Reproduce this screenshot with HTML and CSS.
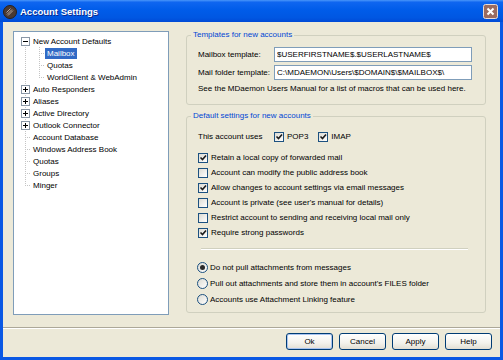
FILE: index.html
```html
<!DOCTYPE html>
<html lang="en">
<head>
    <meta charset="UTF-8">
    <meta name="viewport" content="width=device-width, initial-scale=1.0">
    <title>Account Settings</title>
    <link rel="stylesheet" href="styles.css">
</head>
<body>
    <div class="window">
        <div class="titlebar">
            <svg class="app-icon" width="14" height="14" viewBox="0 0 14 14">
                <circle cx="7" cy="7" r="6.5" fill="#4a3a33" stroke="#2b201b"/>
                <path d="M4 9.5l5-5M5 10.5l5-5M3.5 7.5l4-4" stroke="#b9a89c" stroke-width="1"/>
            </svg>
            <span class="title">Account Settings</span>
            <svg class="close-btn" width="15" height="15" viewBox="0 0 15 15">
                <rect x="0.5" y="0.5" width="14" height="14" rx="2" fill="#9a6b60" stroke="#e9dcd6"/>
                <path d="M4.5 4.5l6 6M10.5 4.5l-6 6" stroke="#fff" stroke-width="2"/>
            </svg>
        </div>

        <div class="client">
            <div class="main">
                <ul class="tree">
                    <li class="node"><span class="conn top-first"><svg width="9" height="9"><rect x="0.5" y="0.5" width="8" height="8" fill="#fff" stroke="#8a97a6"/><path d="M2 4.5h5" stroke="#000"/></svg></span><span class="label">New Account Defaults</span></li>
                    <li class="node"><span class="conn pass"></span><span class="conn sub-mid"></span><span class="label selected">Mailbox</span></li>
                    <li class="node"><span class="conn pass"></span><span class="conn sub-mid"></span><span class="label">Quotas</span></li>
                    <li class="node"><span class="conn pass"></span><span class="conn sub-last"></span><span class="label">WorldClient &amp; WebAdmin</span></li>
                    <li class="node"><span class="conn top-mid"><svg width="9" height="9"><rect x="0.5" y="0.5" width="8" height="8" fill="#fff" stroke="#8a97a6"/><path d="M2 4.5h5M4.5 2v5" stroke="#000"/></svg></span><span class="label">Auto Responders</span></li>
                    <li class="node"><span class="conn top-mid"><svg width="9" height="9"><rect x="0.5" y="0.5" width="8" height="8" fill="#fff" stroke="#8a97a6"/><path d="M2 4.5h5M4.5 2v5" stroke="#000"/></svg></span><span class="label">Aliases</span></li>
                    <li class="node"><span class="conn top-mid"><svg width="9" height="9"><rect x="0.5" y="0.5" width="8" height="8" fill="#fff" stroke="#8a97a6"/><path d="M2 4.5h5M4.5 2v5" stroke="#000"/></svg></span><span class="label">Active Directory</span></li>
                    <li class="node"><span class="conn top-mid"><svg width="9" height="9"><rect x="0.5" y="0.5" width="8" height="8" fill="#fff" stroke="#8a97a6"/><path d="M2 4.5h5M4.5 2v5" stroke="#000"/></svg></span><span class="label">Outlook Connector</span></li>
                    <li class="node"><span class="conn top-mid"></span><span class="label">Account Database</span></li>
                    <li class="node"><span class="conn top-mid"></span><span class="label">Windows Address Book</span></li>
                    <li class="node"><span class="conn top-mid"></span><span class="label">Quotas</span></li>
                    <li class="node"><span class="conn top-mid"></span><span class="label">Groups</span></li>
                    <li class="node"><span class="conn top-last"></span><span class="label">Minger</span></li>
                </ul>

                <div class="panel">
                    <fieldset class="group">
                        <legend>Templates for new accounts</legend>
                        <div class="field-row">
                            <span class="field-label">Mailbox template:</span>
                            <input class="text-input" type="text" value="$USERFIRSTNAME$.$USERLASTNAME$">
                        </div>
                        <div class="field-row">
                            <span class="field-label">Mail folder template:</span>
                            <input class="text-input" type="text" value="C:\MDAEMON\Users\$DOMAIN$\$MAILBOX$\">
                        </div>
                        <p class="note">See the MDaemon Users Manual for a list of macros that can be used here.</p>
                    </fieldset>

                    <fieldset class="group defaults">
                        <legend>Default settings for new accounts</legend>
                        <div class="uses-row">
                            <span class="field-label">This account uses</span>
                            <span class="option"><span class="box on"><svg width="8" height="8"><path d="M1.5 3.5l2 2 3.5-4" fill="none" stroke="#1b1b1b" stroke-width="1.6"/></svg></span>POP3</span>
                            <span class="option imap"><span class="box on"><svg width="8" height="8"><path d="M1.5 3.5l2 2 3.5-4" fill="none" stroke="#1b1b1b" stroke-width="1.6"/></svg></span>IMAP</span>
                        </div>

                        <div class="options">
                            <div class="option"><span class="box on"><svg width="8" height="8"><path d="M1.5 3.5l2 2 3.5-4" fill="none" stroke="#1b1b1b" stroke-width="1.6"/></svg></span>Retain a local copy of forwarded mail</div>
                            <div class="option"><span class="box"></span>Account can modify the public address book</div>
                            <div class="option"><span class="box on"><svg width="8" height="8"><path d="M1.5 3.5l2 2 3.5-4" fill="none" stroke="#1b1b1b" stroke-width="1.6"/></svg></span>Allow changes to account settings via email messages</div>
                            <div class="option"><span class="box"></span>Account is private (see user's manual for details)</div>
                            <div class="option"><span class="box"></span>Restrict account to sending and receiving local mail only</div>
                            <div class="option"><span class="box on"><svg width="8" height="8"><path d="M1.5 3.5l2 2 3.5-4" fill="none" stroke="#1b1b1b" stroke-width="1.6"/></svg></span>Require strong passwords</div>
                        </div>

                        <div class="sep"></div>

                        <div class="radios">
                            <div class="radio-row"><span class="radio on"></span>Do not pull attachments from messages</div>
                            <div class="radio-row"><span class="radio"></span>Pull out attachments and store them in account's FILES folder</div>
                            <div class="radio-row"><span class="radio"></span>Accounts use Attachment Linking feature</div>
                        </div>
                    </fieldset>
                </div>
            </div>

            <div class="footer-sep"></div>
            <div class="buttons">
                <button class="btn default">Ok</button>
                <button class="btn">Cancel</button>
                <button class="btn">Apply</button>
                <button class="btn">Help</button>
            </div>
        </div>
    </div>
</body>
</html>
```

FILE: styles.css
```css
body {
    margin: 0;
    font-family: "Liberation Sans", Arial, sans-serif;
    font-size: 8px;
    color: #000;
}

.window {
    width: 503px;
    height: 360px;
    display: flex;
    flex-direction: column;
}

/* title bar */
.titlebar {
    height: 22px;
    flex: none;
    display: flex;
    align-items: center;
    padding: 1px 5px 0 3px;
    box-sizing: border-box;
    background: linear-gradient(#4a96fa 0%, #0f66f0 10%, #005ce9 45%, #0057e2 80%, #004ad6 100%);
}

.app-icon {
    flex: none;
}

.title {
    flex: 1;
    margin-left: 3px;
    color: #fff;
    font-weight: bold;
    font-size: 9.5px;
    text-shadow: 1px 1px 0 #0c2a8c;
}

.close-btn {
    flex: none;
}

/* dialog body */
.client {
    flex: 1;
    display: flex;
    flex-direction: column;
    background-color: #ece9d8;
    border: 3px solid #0a58e4;
    border-top: 0;
}

.main {
    display: flex;
    align-items: flex-start;
    padding: 8px 0 0 10px;
}

/* tree */
.tree {
    list-style: none;
    margin: 1px 0 0 0;
    padding: 3px 0 0 5px;
    width: 156px;
    height: 284px;
    box-sizing: border-box;
    border: 1px solid #7f9db9;
    background-color: #fff;
}

.node {
    display: flex;
    align-items: center;
    height: 12px;
    line-height: 12px;
    white-space: nowrap;
}

.conn {
    flex: none;
    width: 12px;
    height: 12px;
    background-repeat: no-repeat;
}

.conn svg {
    display: block;
    margin: 2px 0 0 2px;
}

.conn.pass {
    width: 14px;
}

.top-first, .top-mid, .top-last, .pass, .sub-mid, .sub-last {
    --v: repeating-linear-gradient(to bottom, #c4c4c4 0 1px, transparent 1px 2px);
    --h: repeating-linear-gradient(to right, #c4c4c4 0 1px, transparent 1px 2px);
}

.top-first {
    background-image: var(--v), var(--h);
    background-size: 1px 6px, 6px 1px;
    background-position: 6px 6px, 6px 6px;
}

.top-mid, .sub-mid {
    background-image: var(--v), var(--h);
    background-size: 1px 12px, 6px 1px;
    background-position: 6px 0, 6px 6px;
}

.top-last, .sub-last {
    background-image: var(--v), var(--h);
    background-size: 1px 7px, 6px 1px;
    background-position: 6px 0, 6px 6px;
}

.pass {
    background-image: var(--v);
    background-size: 1px 12px;
    background-position: 6px 0;
}

.label {
    padding: 0 2px;
    line-height: 11px;
}

.label.selected {
    background-color: #316ac5;
    color: #fff;
}

/* right side */
.panel {
    margin-left: 17px;
    width: 300px;
}

.group {
    margin: 0;
    padding: 7px 13px 10px 11px;
    min-width: 0;
    border: 1px solid #d0d0bf;
    border-radius: 3px;
}

.group + .group {
    margin-top: 6px;
}

.group legend {
    margin-left: -7px;
    padding: 0 2px;
    line-height: 10px;
    font-size: 8px;
    color: #0046d5;
}

.field-row {
    display: flex;
    align-items: center;
    height: 15px;
}

.field-row + .field-row {
    margin-top: 3px;
}

.field-label {
    flex: none;
    width: 76px;
}

.text-input {
    width: 199px;
    height: 15px;
    margin: 0;
    padding: 0 2px;
    box-sizing: border-box;
    border: 1px solid #7f9db9;
    background-color: #fff;
    font-family: "Liberation Sans", Arial, sans-serif;
    font-size: 8px;
    color: #000;
}

.note {
    margin: 4px 0 0;
    line-height: 10px;
}

.defaults {
    padding: 8px 13px 5px 11px;
}

.uses-row {
    display: flex;
    align-items: center;
    height: 15px;
}

.option {
    display: flex;
    align-items: center;
    height: 15px;
}

.option.imap {
    margin-left: 10px;
}

.options {
    margin-top: 6px;
}

.box {
    flex: none;
    width: 10px;
    height: 10px;
    margin-right: 3px;
    box-sizing: border-box;
    border: 1px solid #1c5180;
    background: linear-gradient(135deg, #dcdbd3, #ffffff);
}

.box svg {
    display: block;
}

.sep {
    margin: 8px 4px 0 3px;
    border-top: 1px solid #d0d0bf;
    border-bottom: 1px solid #fff;
}

.radios {
    margin-top: 9px;
}

.radio-row {
    display: flex;
    align-items: center;
    height: 16px;
}

.radio {
    flex: none;
    display: flex;
    align-items: center;
    justify-content: center;
    width: 11px;
    height: 11px;
    margin: 0 2px 0 -1px;
    box-sizing: border-box;
    border: 1px solid #1c5180;
    border-radius: 50%;
    background: linear-gradient(135deg, #dcdbd3, #ffffff);
}

.radio.on::after {
    content: "";
    width: 5px;
    height: 5px;
    border-radius: 50%;
    background-color: #2b2b2b;
}

/* bottom buttons */
.footer-sep {
    margin-top: 12px;
    border-top: 1px solid #aca899;
    border-bottom: 1px solid #fff;
}

.buttons {
    display: flex;
    justify-content: flex-end;
    gap: 6px;
    padding: 4px 8px 0 0;
}

.btn {
    width: 47px;
    height: 17px;
    padding: 0;
    border: 1px solid #003c74;
    border-radius: 3px;
    background: linear-gradient(#ffffff, #f3f2ec 60%, #e2ded3);
    font-family: "Liberation Sans", Arial, sans-serif;
    font-size: 8px;
    color: #000;
}

.btn.default {
    box-shadow: inset 0 0 0 1px #a9c4f0;
}
```
